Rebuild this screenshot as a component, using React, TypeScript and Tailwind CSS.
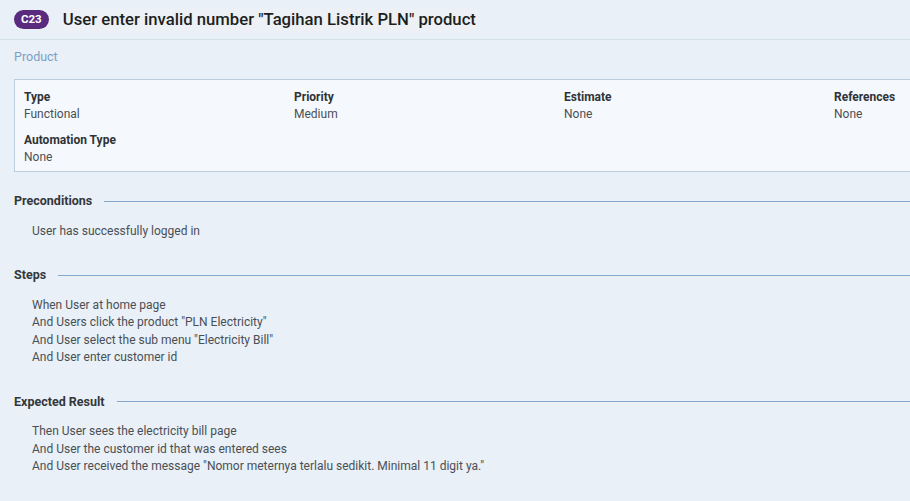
import React from 'react';

const font = { fontFamily: 'Roboto, "Liberation Sans", sans-serif' };

const Field: React.FC<{ label: string; value: string }> = ({ label, value }) => (
  <div className="leading-[17px]">
    <div className="text-[12px] font-bold text-[#2f3337]">{label}</div>
    <div className="text-[12px] text-[#4a4f55]">{value}</div>
  </div>
);

const Section: React.FC<{ title: string; lines: string[] }> = ({ title, lines }) => (
  <div className="mb-[26px]">
    <div className="flex items-center gap-[12px]">
      <h3 className="text-[12.5px] font-bold text-[#33373b] whitespace-nowrap">{title}</h3>
      <div className="h-px flex-1 bg-[#86a8cc]" />
    </div>
    <div className="pl-[18px] pt-[12px]">
      {lines.map((line, i) => (
        <p key={i} className="text-[12px] leading-[17.4px] text-[#4a4f55]">{line}</p>
      ))}
    </div>
  </div>
);

export default function App() {
  return (
    <div className="w-[910px] h-[501px] overflow-hidden bg-[#e9f0f7]" style={font}>
      <div className="flex h-[40px] items-center gap-[13px] border-b border-[#d2dee8] px-[14px]">
        <span className="rounded-full bg-[#5a2a7f] px-[7px] py-[2px] text-[11.5px] font-bold leading-[15px] text-white">C23</span>
        <h1 className="bg-[#edf0f4] px-[1px] text-[16.7px] font-medium leading-[22px] text-[#1c1f22]">
          User enter invalid number "Tagihan Listrik PLN" product
        </h1>
      </div>

      <div className="pl-[14px]">
        <div className="pt-[8px] text-[12.5px] leading-[17px] text-[#7c9fc6]">Product</div>

        <div className="mt-[14px] w-[1100px] border border-[#b9cde0] bg-[#f5f9fd] px-[9px] pt-[9px] pb-[5px]">
          <div className="grid grid-cols-[270px_270px_270px_270px] gap-y-[9px]">
            <Field label="Type" value="Functional" />
            <Field label="Priority" value="Medium" />
            <Field label="Estimate" value="None" />
            <Field label="References" value="None" />
            <Field label="Automation Type" value="None" />
          </div>
        </div>

        <div className="mt-[20px]">
          <Section title="Preconditions" lines={['User has successfully logged in']} />
          <Section
            title="Steps"
            lines={[
              'When User at home page',
              'And Users click the product "PLN Electricity"',
              'And User select the sub menu "Electricity Bill"',
              'And User enter customer id',
            ]}
          />
          <Section
            title="Expected Result"
            lines={[
              'Then User sees the electricity bill page',
              'And User the customer id that was entered sees',
              'And User received the message "Nomor meternya terlalu sedikit. Minimal 11 digit ya."',
            ]}
          />
        </div>
      </div>
    </div>
  );
}
